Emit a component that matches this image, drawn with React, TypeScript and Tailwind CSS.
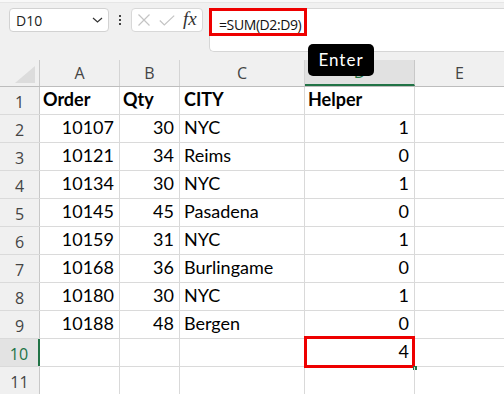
const rows: [string, string, string, string][] = [
  ["Order", "Qty", "CITY", "Helper"],
  ["10107", "30", "NYC", "1"],
  ["10121", "34", "Reims", "0"],
  ["10134", "30", "NYC", "1"],
  ["10145", "45", "Pasadena", "0"],
  ["10159", "31", "NYC", "1"],
  ["10168", "36", "Burlingame", "0"],
  ["10180", "30", "NYC", "1"],
  ["10188", "48", "Bergen", "0"],
  ["", "", "", "4"],
  ["", "", "", ""],
];

const cell = "h-full border-r border-[#d9d9d9] flex items-end pb-[1px] shrink-0";

export default function App() {
  return (
    <div className="relative w-[504px] h-[394px] overflow-hidden bg-[#f0f0f0] font-['Open_Sans',sans-serif]">
      {/* top strip */}
      <div className="absolute top-0 left-0 right-0 h-[3px] bg-[#f8f8f8] border-b border-[#e6e6e6]" />

      {/* formula bar */}
      <div className="flex items-start h-[60px] pt-[8px]">
        <div className="ml-[9px] w-[100px] h-[24px] bg-white border border-[#d2d2d2] rounded-[4px] flex items-center justify-between pl-[6px] pr-[5px]">
          <span className="text-[14px] text-[#222]">D10</span>
          <svg width="11" height="6" viewBox="0 0 11 6" fill="none">
            <path d="M1 1l4.5 4 4.5-4" stroke="#333" strokeWidth="1.2" />
          </svg>
        </div>
        <div className="w-[22px] h-[24px] flex flex-col items-center justify-center gap-[2px]">
          <span className="w-[2px] h-[2px] bg-[#444]" />
          <span className="w-[2px] h-[2px] bg-[#444]" />
          <span className="w-[2px] h-[2px] bg-[#444]" />
        </div>
        <div className="w-[72px] h-[24px] bg-white border border-[#d8d8d8] rounded-[4px] flex items-center pl-[5px]">
          <svg width="14" height="12" viewBox="0 0 14 12" fill="none">
            <path d="M1.5 0.5l11 11M12.5 0.5l-11 11" stroke="#c4c4c4" strokeWidth="1.2" />
          </svg>
          <svg className="ml-[8px]" width="16" height="11" viewBox="0 0 16 11" fill="none">
            <path d="M0.8 5.5l4.5 4.5L15.2 0.6" stroke="#c4c4c4" strokeWidth="1.2" />
          </svg>
          <span className="ml-[8px] text-[19px] leading-none italic text-[#333] font-['Liberation_Serif',serif] -mt-[3px]">
            fx
          </span>
        </div>
        <div className="relative ml-[6px] flex-1 h-[44px] bg-white border border-r-0 border-[#d6d6d6] rounded-l-[5px] pl-[9px] pt-[3px]">
          <span className="text-[14px] tracking-[-0.4px] text-[#111]">=SUM(D2:D9)</span>
          <div className="absolute -left-[1px] -top-[1px] w-[98px] h-[28px] border-[3px] border-[#ee0000]" />
        </div>
      </div>

      {/* column header */}
      <div className="flex h-[27px] border-b border-[#bdbdbd] text-[16px] text-[#444]">
        <div className="w-[40px] h-full border-r border-[#c8c8c8] flex items-end justify-end pr-[4px] pb-[3px]">
          <div className="w-0 h-0 border-l-[20px] border-l-transparent border-b-[17px] border-b-[#dcdcdc]" />
        </div>
        <div className="w-[80px] h-full border-r border-[#d4d4d4] flex items-center justify-center">A</div>
        <div className="w-[60px] h-full border-r border-[#d4d4d4] flex items-center justify-center">B</div>
        <div className="w-[125px] h-full border-r border-[#d4d4d4] flex items-center justify-center">C</div>
        <div className="w-[110px] h-full border-r border-[#c8c8c8] bg-[#e1e1e1] border-b-2 border-b-[#217346] flex items-center justify-center text-[#217346]">
          D
        </div>
        <div className="flex-1 h-full flex items-center justify-center">E</div>
      </div>

      {/* rows */}
      <div className="font-['Lato',sans-serif] text-[18px] text-black">
        {rows.map((r, i) => {
          const n = i + 1;
          const bold = n === 1;
          const active = n === 10;
          return (
            <div key={n} className="flex h-[28px] border-b border-[#dadada] bg-white">
              <div
                className={
                  active
                    ? "w-[40px] h-full shrink-0 bg-[#e3e3e3] border-r-2 border-[#217346] flex items-center justify-center pt-[2px] font-['Open_Sans',sans-serif] text-[16px] text-[#217346]"
                    : "w-[40px] h-full shrink-0 bg-[#f0f0f0] border-r border-[#c8c8c8] flex items-center justify-center pt-[2px] font-['Open_Sans',sans-serif] text-[16px] text-[#444]"
                }
              >
                {n}
              </div>
              <div className={`${cell} w-[80px] ${bold ? "justify-start pl-[3px] font-bold" : "justify-end pr-[5px]"}`}>
                {r[0]}
              </div>
              <div className={`${cell} w-[60px] ${bold ? "justify-start pl-[3px] font-bold" : "justify-end pr-[5px]"}`}>
                {r[1]}
              </div>
              <div className={`${cell} w-[125px] justify-start pl-[4px] ${bold ? "font-bold" : ""}`}>{r[2]}</div>
              <div className={`${cell} relative w-[110px] ${bold ? "justify-start pl-[3px] font-bold" : "justify-end pr-[5px]"}`}>
                {r[3]}
                {active && (
                  <>
                    <div className="absolute -left-[1px] -right-[1px] -top-[3px] -bottom-[2px] border-[3px] border-[#ee0000]" />
                    <div className="absolute -right-[3px] -bottom-[4px] w-[4px] h-[4px] bg-[#217346]" />
                  </>
                )}
              </div>
              <div className="flex-1 h-full" />
            </div>
          );
        })}
      </div>

      {/* tooltip */}
      <div className="absolute left-[308px] top-[44px] w-[66px] h-[32px] bg-black rounded-[5px] flex items-center justify-center text-white text-[17px] tracking-[1px] font-['Lato',sans-serif]">
        Enter
      </div>
    </div>
  );
}
